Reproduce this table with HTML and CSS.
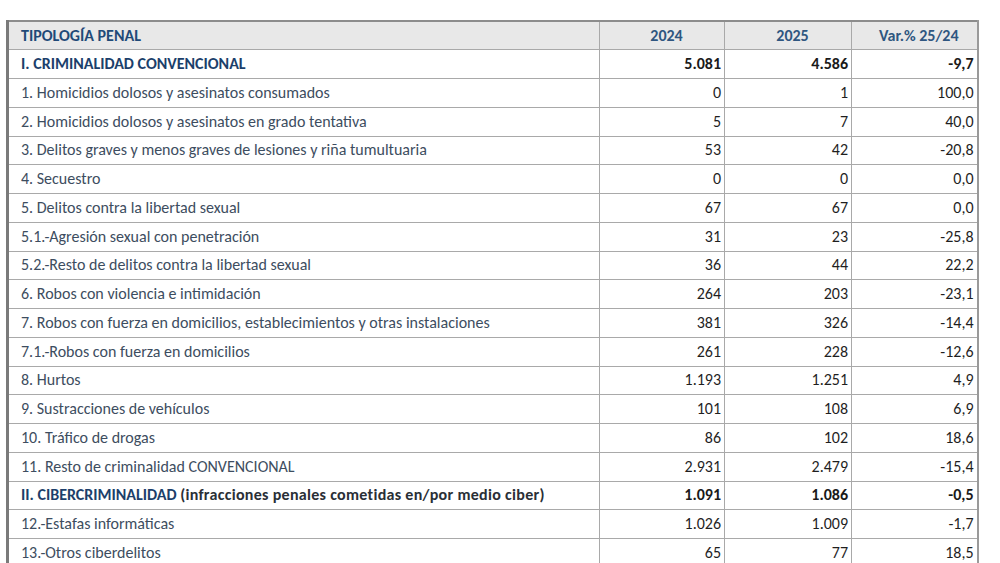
FILE: index.html
```html
<!DOCTYPE html>
<html lang="es">
<head>
<meta charset="utf-8">
<title>Tipología penal</title>
<link rel="stylesheet" href="styles.css">
</head>
<body>
<table class="stats">
  <colgroup>
    <col class="c-name"><col class="c-num"><col class="c-num2"><col class="c-var">
  </colgroup>
  <thead>
    <tr class="head">
      <th class="name">TIPOLOGÍA PENAL</th>
      <th>2024</th>
      <th>2025</th>
      <th>Var.% 25/24</th>
    </tr>
  </thead>
  <tbody>
    <tr class="section"><td class="name">I. CRIMINALIDAD CONVENCIONAL</td><td>5.081</td><td>4.586</td><td>-9,7</td></tr>
    <tr><td class="name">1. Homicidios dolosos y asesinatos consumados</td><td>0</td><td>1</td><td>100,0</td></tr>
    <tr><td class="name">2. Homicidios dolosos y asesinatos en grado tentativa</td><td>5</td><td>7</td><td>40,0</td></tr>
    <tr><td class="name">3. Delitos graves y menos graves de lesiones y riña tumultuaria</td><td>53</td><td>42</td><td>-20,8</td></tr>
    <tr><td class="name">4. Secuestro</td><td>0</td><td>0</td><td>0,0</td></tr>
    <tr><td class="name">5. Delitos contra la libertad sexual</td><td>67</td><td>67</td><td>0,0</td></tr>
    <tr><td class="name">5.1.-Agresión sexual con penetración</td><td>31</td><td>23</td><td>-25,8</td></tr>
    <tr><td class="name">5.2.-Resto de delitos contra la libertad sexual</td><td>36</td><td>44</td><td>22,2</td></tr>
    <tr><td class="name">6. Robos con violencia e intimidación</td><td>264</td><td>203</td><td>-23,1</td></tr>
    <tr><td class="name">7. Robos con fuerza en domicilios, establecimientos y otras instalaciones</td><td>381</td><td>326</td><td>-14,4</td></tr>
    <tr><td class="name">7.1.-Robos con fuerza en domicilios</td><td>261</td><td>228</td><td>-12,6</td></tr>
    <tr><td class="name">8. Hurtos</td><td>1.193</td><td>1.251</td><td>4,9</td></tr>
    <tr><td class="name">9. Sustracciones de vehículos</td><td>101</td><td>108</td><td>6,9</td></tr>
    <tr><td class="name">10. Tráfico de drogas</td><td>86</td><td>102</td><td>18,6</td></tr>
    <tr><td class="name">11. Resto de criminalidad CONVENCIONAL</td><td>2.931</td><td>2.479</td><td>-15,4</td></tr>
    <tr class="section"><td class="name">II. CIBERCRIMINALIDAD <span class="paren">(infracciones penales cometidas en/por medio ciber)</span></td><td>1.091</td><td>1.086</td><td>-0,5</td></tr>
    <tr><td class="name">12.-Estafas informáticas</td><td>1.026</td><td>1.009</td><td>-1,7</td></tr>
    <tr><td class="name">13.-Otros ciberdelitos</td><td>65</td><td>77</td><td>18,5</td></tr>
  </tbody>
</table>
</body>
</html>
```

FILE: styles.css
```css
html, body {
  margin: 0;
  padding: 0;
  background: #ffffff;
}

body {
  padding: 20px 0 0 6px;
  font-family: Carlito, Lato, "Open Sans", "Liberation Sans", sans-serif;
  font-size: 16px;
  color: #3d4d60;
}

.stats {
  border-collapse: collapse;
  table-layout: fixed;
  width: 971px;
  border-top: 2px solid #8c8c8c;
  border-left: 3px solid #7a7a7a;
  border-right: 2px solid #9a9a9a;
}

.c-name { width: 592px; }
.c-num { width: 125px; }
.c-num2 { width: 127px; }
.c-var { width: 126px; }

.stats tr {
  height: 28.76px;
}

.stats th,
.stats td {
  border: 1.5px solid #a9a9a9;
  padding: 0 3px 0 12px;
  white-space: nowrap;
  line-height: 18px;
}

.stats td {
  text-align: right;
  color: #1f1f1f;
}

.stats td.name {
  text-align: left;
  color: #3d4d60;
}

.head th {
  background: #e8e8e8;
  color: #2f5680;
  font-weight: bold;
  text-align: center;
}

.head th.name {
  text-align: left;
  color: #1f4a78;
}

.section td {
  font-weight: bold;
  color: #1a1a1a;
}

.section td.name {
  color: #1c3f6b;
}

.section .paren {
  color: #2a2f36;
  letter-spacing: 0.3px;
}
```
